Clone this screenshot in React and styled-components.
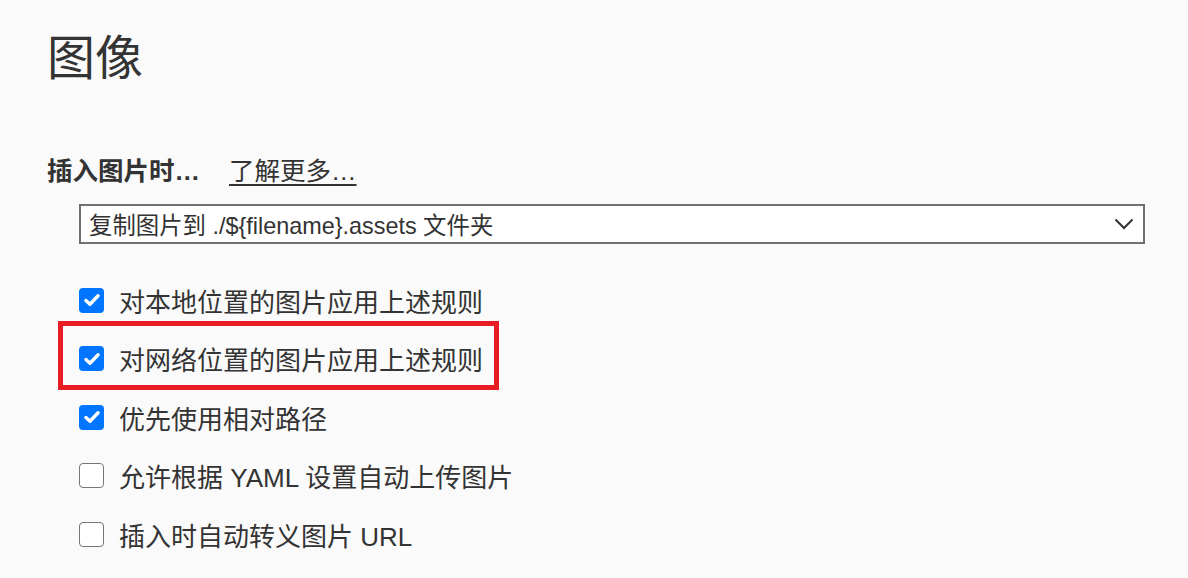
import React from 'react'
import styled, { createGlobalStyle } from 'styled-components'

const GlobalStyle = createGlobalStyle`
  html, body {
    margin: 0;
    padding: 0;
    background: #fafafa;
  }
  body {
    font-family: "Liberation Sans", "Noto Sans CJK SC", sans-serif;
    color: #333;
  }
`

const Page = styled.div`
  padding: 24px 0 0 47px;
  width: 1098px;
`

const Title = styled.h1`
  font-size: 48px;
  font-weight: 400;
  line-height: 70px;
  margin: 0 0 56px;
  color: #333;
`

const SectionHead = styled.div`
  display: flex;
  align-items: center;
  gap: 29px;
  height: 36px;
  font-size: 25.5px;
`

const Label = styled.span`
  font-weight: 700;
`

const Link = styled.a`
  color: #333;
  text-decoration: underline;
  text-underline-offset: 4px;
  cursor: pointer;
`

const Select = styled.div`
  box-sizing: border-box;
  margin: 18px 0 27px 32px;
  width: 1066px;
  height: 40px;
  border: 2px solid #707070;
  background: #fff;
  display: flex;
  align-items: center;
  justify-content: space-between;
  padding: 0 9px 0 8px;
  font-size: 23.4px;
  color: #333;
`

const List = styled.div`
  display: flex;
  flex-direction: column;
  padding-left: 32px;
`

const Row = styled.div`
  display: flex;
  align-items: center;
  gap: 15px;
  height: 58.5px;
  font-size: 26px;
  color: #333;
  box-sizing: border-box;
  width: fit-content;

  ${({ $highlight }) => $highlight && `
    height: 69px;
    border: 5px solid #e81c24;
    margin: -8.75px 0 -1.75px -21px;
    padding: 7px 11px 0 16px;
  `}
`

const Box = styled.span`
  box-sizing: border-box;
  width: 25px;
  height: 25px;
  border-radius: 4px;
  display: flex;
  align-items: center;
  justify-content: center;
  flex-shrink: 0;
  background: ${({ $checked }) => ($checked ? '#0075ff' : '#fff')};
  border: ${({ $checked }) => ($checked ? 'none' : '1.5px solid #767676')};
`

const Check = ({ checked }) => (
  <Box $checked={checked}>
    {checked && (
      <svg width="18" height="18" viewBox="0 0 16 16">
        <path d="M2.6 8.4 L6.2 11.8 L13.4 4.2" fill="none" stroke="#fff" strokeWidth="3" strokeLinecap="round" strokeLinejoin="round" />
      </svg>
    )}
  </Box>
)

const options = [
  { text: '对本地位置的图片应用上述规则', checked: true },
  { text: '对网络位置的图片应用上述规则', checked: true, highlight: true },
  { text: '优先使用相对路径', checked: true },
  { text: '允许根据 YAML 设置自动上传图片', checked: false },
  { text: '插入时自动转义图片 URL', checked: false },
]

const App = () => {
  return (
    <>
      <GlobalStyle />
      <Page>
        <Title>图像</Title>
        <SectionHead>
          <Label>插入图片时…</Label>
          <Link>了解更多…</Link>
        </SectionHead>
        <Select>
          <span>复制图片到 ./${'{filename}'}.assets 文件夹</span>
          <svg width="20" height="12" viewBox="0 0 20 12">
            <path d="M1.5 1.5 L10 10 L18.5 1.5" fill="none" stroke="#333" strokeWidth="2" />
          </svg>
        </Select>
        <List>
          {options.map((o) => (
            <Row key={o.text} $highlight={o.highlight}>
              <Check checked={o.checked} />
              <span>{o.text}</span>
            </Row>
          ))}
        </List>
      </Page>
    </>
  )
}

export default App
